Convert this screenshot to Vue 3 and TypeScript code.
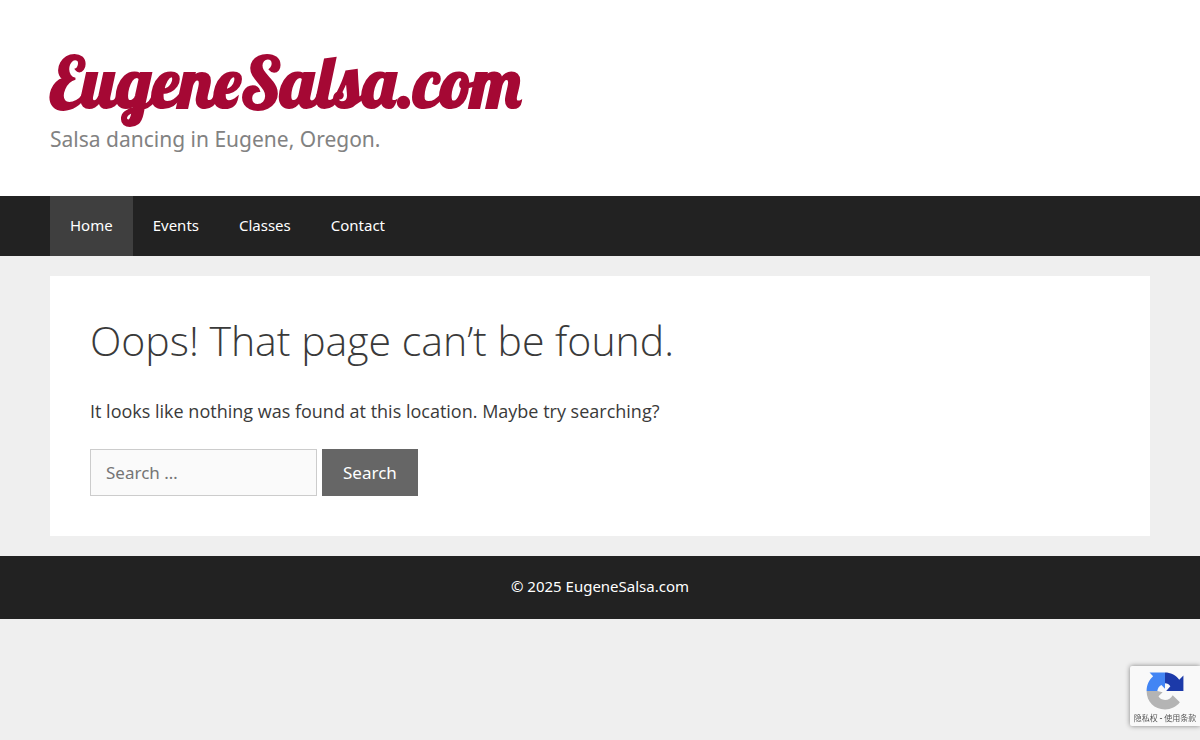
<script setup lang="ts">
import { ref } from 'vue'

interface NavItem {
  label: string
  href: string
  current?: boolean
}

const navItems: NavItem[] = [
  { label: 'Home', href: '#home', current: true },
  { label: 'Events', href: '#events' },
  { label: 'Classes', href: '#classes' },
  { label: 'Contact', href: '#contact' },
]

const query = ref('')
</script>

<template>
  <div class="page">
    <header class="site-header">
      <div class="container">
        <a class="site-title" href="#home">EugeneSalsa.com</a>
        <p class="tagline">Salsa dancing in Eugene, Oregon.</p>
      </div>
    </header>

    <nav class="site-nav" aria-label="Primary">
      <ul class="container nav-list">
        <li v-for="item in navItems" :key="item.label">
          <a
            class="nav-link"
            :class="{ current: item.current }"
            :href="item.href"
            :aria-current="item.current ? 'page' : undefined"
          >{{ item.label }}</a>
        </li>
      </ul>
    </nav>

    <div class="container">
      <main class="content">
        <h1>Oops! That page can’t be found.</h1>
        <p class="message">It looks like nothing was found at this location. Maybe try searching?</p>
        <form class="search" role="search" @submit.prevent>
          <input
            v-model="query"
            class="search-field"
            type="search"
            placeholder="Search …"
            aria-label="Search for:"
          />
          <button class="search-button" type="submit">Search</button>
        </form>
      </main>
    </div>

    <footer class="site-footer">© 2025 EugeneSalsa.com</footer>

    <aside class="captcha" aria-label="reCAPTCHA">
      <svg class="captcha-logo" viewBox="0 0 64 64" aria-hidden="true">
        <path fill="#1c3aa9" d="M63 32V6l-7 7C50 5 41 1 32 1v18c4 0 7 2 9 5l-7 8h29Z" />
        <path fill="#4285f4" d="M32 1H6l6 6C5 13 1 22 1 32h18c1-5 3-8 7-10l6 6V1Z" />
        <path fill="#b4b4b4" d="M1 32c0 18 13 31 31 31 10 0 19-4 25-12L45 39c-3 5-7 8-13 8-5 0-9-2-11-6l7-7-9-2H1Z" />
      </svg>
      <div class="captcha-links">
        <a href="#privacy">隐私权</a><span class="dash"> - </span><a href="#terms">使用条款</a>
      </div>
    </aside>
  </div>
</template>

<style>
body {
  margin: 0;
  background: #efefef;
}
</style>

<style scoped>
.page {
  color: #3a3a3a;
  font-family: "Noto Sans", "Open Sans", sans-serif;
  font-size: 17px;
  line-height: 26px;
}

.container {
  box-sizing: border-box;
  max-width: 1100px;
  margin: 0 auto;
}

.site-header {
  background: #fff;
  padding: 40px 0;
}

.site-title {
  display: block;
  color: #a50834;
  font-family: "Lobster", "Liberation Serif", serif;
  font-size: 70px;
  font-weight: 700;
  line-height: 84px;
  text-decoration: none;
}

.tagline {
  margin: 0;
  padding-bottom: 2px;
  color: #828282;
  font-size: 21px;
  line-height: 30px;
}

.site-nav {
  background: #222;
}

.nav-list {
  display: flex;
  padding: 0;
  list-style: none;
}

.nav-link {
  display: block;
  padding: 0 20px 2px;
  color: #fff;
  font-size: 15px;
  line-height: 58px;
  text-decoration: none;
}

.nav-link.current {
  background: #3f3f3f;
}

.content {
  margin: 20px 0;
  padding: 40px;
  background: #fff;
}

h1,
.message {
  font-family: "Open Sans", "Noto Sans", sans-serif;
}

h1 {
  margin: 0 0 34px;
  font-size: 41px;
  font-weight: 300;
  line-height: 48px;
}

.message {
  margin: 0 0 25px;
  font-size: 18px;
}

.search {
  display: flex;
  gap: 5px;
}

.search-field,
.search-button {
  box-sizing: border-box;
  height: 47px;
  margin: 0;
  border-radius: 0;
  font: inherit;
}

.search-field {
  width: 227px;
  padding: 0 15px;
  border: 1px solid #ccc;
  background: #fafafa;
  color: #666;
  appearance: none;
}

.search-field::placeholder {
  color: #757575;
  opacity: 1;
}

.search-button {
  padding: 0 20px;
  border: 1px solid #666;
  background: #666;
  color: #fff;
}

.site-footer {
  padding: 20px 20px 22px;
  background: #222;
  color: #fff;
  font-size: 15px;
  line-height: 21px;
  text-align: center;
}

.captcha {
  position: fixed;
  right: 0;
  bottom: 14px;
  box-sizing: border-box;
  width: 70px;
  height: 60px;
  padding-top: 6px;
  overflow: hidden;
  border-radius: 2px 0 0 2px;
  background: #f9f9f9;
  box-shadow: 0 0 5px gray;
  text-align: center;
}

.captcha-logo {
  display: block;
  width: 38px;
  height: 38px;
  margin: 0 auto;
}

.captcha-links {
  color: #555;
  font-family: "Noto Sans CJK SC", sans-serif;
  font-size: 8px;
  line-height: 16px;
  white-space: pre;
}

.captcha-links a {
  color: inherit;
  text-decoration: none;
}

.dash {
  font-weight: 700;
}
</style>
